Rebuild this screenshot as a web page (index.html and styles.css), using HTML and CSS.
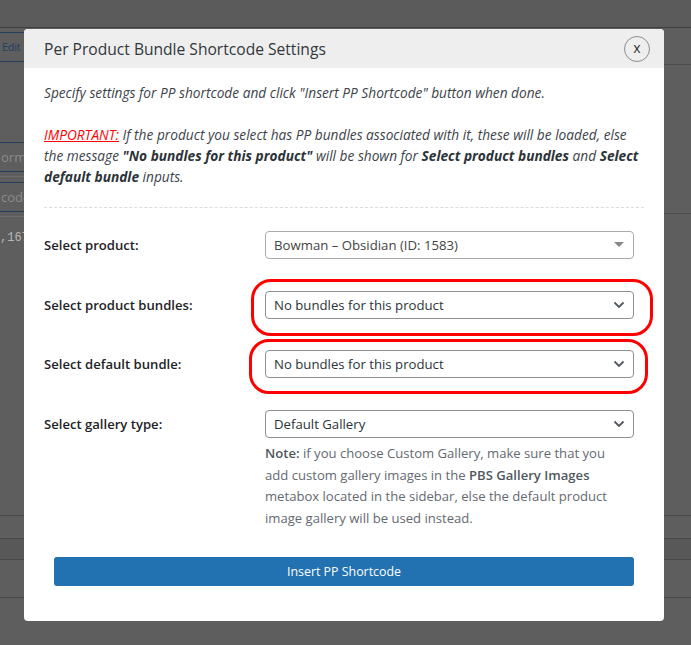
FILE: index.html
```html
<!DOCTYPE html>
<html>
<head>
<meta charset="utf-8">
<link rel="stylesheet" href="styles.css">
</head>
<body>
<div class="admin">
  <div class="topbar"></div>
  <div class="admin-main">
    <div class="left-col">
      <div class="bg-btn">Edit</div>
      <div class="bg-field f-orm">orm</div>
      <div class="bg-sep"></div>
      <div class="bg-field f-code">code</div>
      <div class="bg-sep"></div>
      <div class="bg-mono">,167</div>
    </div>
    <div class="mid-col"></div>
    <div class="right-col">
      <div class="r-line r1"></div>
      <div class="r-line r2"></div>
    </div>
  </div>
  <div class="bottom-rows">
    <div class="b-row b1"></div>
    <div class="b-row b2"></div>
    <div class="b-row b3"></div>
    <div class="b-row b4"></div>
  </div>
</div>

<div class="modal">
  <div class="modal-head">
    <h2 class="modal-title">Per Product Bundle Shortcode Settings</h2>
    <span class="close-btn">x</span>
  </div>
  <div class="modal-body">
    <p class="intro">Specify settings for PP shortcode and click "Insert PP Shortcode" button when done.</p>
    <p class="intro important-p"><span class="important">IMPORTANT:</span> If the product you select has PP bundles associated with it, these will be loaded, else the message <b>"No bundles for this product"</b> will be shown for <b>Select product bundles</b> and <b>Select default bundle</b> inputs.</p>
    <hr class="sep">
    <div class="form-grid">
      <label class="lbl">Select product:</label>
      <div class="cell">
        <div class="sel sel2"><span>Bowman – Obsidian (ID: 1583)</span>
          <svg class="tri" width="10" height="6" viewBox="0 0 10 6"><path d="M0 0 L10 0 L5 5 Z" fill="#888"/></svg>
        </div>
      </div>

      <label class="lbl">Select product bundles:</label>
      <div class="cell">
        <div class="sel"><span>No bundles for this product</span>
          <svg class="chev" width="12" height="8" viewBox="0 0 12 8"><path d="M1.5 1.5 L6 6 L10.5 1.5" fill="none" stroke="#50575e" stroke-width="1.8"/></svg>
        </div>
        <span class="ring ring1"></span>
      </div>

      <label class="lbl">Select default bundle:</label>
      <div class="cell">
        <div class="sel"><span>No bundles for this product</span>
          <svg class="chev" width="12" height="8" viewBox="0 0 12 8"><path d="M1.5 1.5 L6 6 L10.5 1.5" fill="none" stroke="#50575e" stroke-width="1.8"/></svg>
        </div>
        <span class="ring ring2"></span>
      </div>

      <label class="lbl">Select gallery type:</label>
      <div class="cell">
        <div class="sel"><span>Default Gallery</span>
          <svg class="chev" width="12" height="8" viewBox="0 0 12 8"><path d="M1.5 1.5 L6 6 L10.5 1.5" fill="none" stroke="#50575e" stroke-width="1.8"/></svg>
        </div>
        <p class="note"><b>Note:</b> if you choose Custom Gallery, make sure that you add custom gallery images in the <b>PBS Gallery Images</b> metabox located in the sidebar, else the default product image gallery will be used instead.</p>
      </div>
    </div>
    <div class="btn-wrap">
      <button class="insert-btn">Insert PP Shortcode</button>
    </div>
  </div>
</div>
</body>
</html>
```

FILE: styles.css
```css
* { box-sizing: border-box; }
html, body { margin: 0; padding: 0; }
body {
  background: #5e5e5e;
  font-family: "Open Sans", "Noto Sans", sans-serif;
  width: 691px;
  height: 645px;
  overflow: hidden;
  position: relative;
}

/* background admin page (dimmed) */
.admin { width: 691px; }
.topbar {
  height: 28px;
  background: #5b5b5b;
  border-bottom: 1px solid #3e3e3e;
}
.admin-main {
  display: grid;
  grid-template-columns: 24px 640px 27px;
  height: 487px;
}
.left-col { display: flex; flex-direction: column; overflow: hidden; }
.bg-btn {
  margin-top: 4px;
  height: 30px;
  border-top: 1px solid #22405e;
  border-bottom: 1px solid #22405e;
  font-size: 11px;
  color: #1f3f61;
  line-height: 28px;
  padding-left: 2px;
  white-space: nowrap;
  letter-spacing: -0.3px;
}
.bg-field {
  height: 30px;
  border-top: 1px solid #22405e;
  border-bottom: 1px solid #22405e;
  font-size: 13px;
  color: #8a8a8a;
  line-height: 28px;
  white-space: nowrap;
  padding-left: 1px;
}
.f-orm { margin-top: 80px; }
.bg-sep { height: 5px; border-bottom: 1px solid #6c6c6c; }
.f-code { margin-top: 5px; }
.bg-mono {
  margin-top: 14px;
  font-family: "Liberation Mono", "DejaVu Sans Mono", monospace;
  font-size: 12px;
  color: #b8b8b8;
  white-space: nowrap;
}
.right-col { display: flex; flex-direction: column; }
.r-line { border-bottom: 1px solid #4e4e4e; }
.r1 { height: 37px; }
.r2 { height: 149px; }

.bottom-rows { display: flex; flex-direction: column; }
.b-row { border-top: 1px solid #4a4a4a; }
.b1 { height: 23px; }
.b2 { height: 21px; background: #585858; }
.b3 { height: 38px; }
.b4 { height: 48px; }

/* modal */
.modal {
  position: absolute;
  left: 24px;
  top: 29px;
  width: 640px;
  height: 592px;
  background: #fff;
  border-radius: 4px;
  overflow: hidden;
}
.modal-head {
  height: 39px;
  background: #eeeeee;
  display: flex;
  align-items: center;
  justify-content: space-between;
  padding: 0 14px 0 20px;
}
.modal-title {
  margin: 0;
  font-size: 15.6px;
  font-weight: 400;
  color: #32373c;
}
.close-btn {
  width: 26px;
  height: 26px;
  border: 1px solid #8c8c8c;
  border-radius: 50%;
  display: flex;
  align-items: center;
  justify-content: center;
  font-size: 14px;
  color: #333;
  line-height: 1;
  padding-bottom: 2px;
}
.modal-body { padding: 14px 20px 0 20px; }
.intro {
  margin: 0;
  font-size: 13.7px;
  line-height: 21px;
  font-style: italic;
  color: #3c434a;
}
.intro b { color: #2c3338; font-weight: 700; }
.important-p { margin-top: 21px; }
.important { color: #ff0000; text-decoration: underline; }
.sep {
  margin: 20px 0 0 0;
  border: 0;
  border-top: 1px dashed #dcdcde;
  height: 0;
}

.form-grid {
  display: grid;
  grid-template-columns: 221px 369px;
  row-gap: 31.7px;
  margin-top: 23px;
  align-items: start;
}
.lbl {
  font-size: 13.1px;
  font-weight: 600;
  color: #1d2327;
  line-height: 28px;
}
.cell { position: relative; }
.sel {
  height: 28px;
  border: 1px solid #8c8f94;
  border-radius: 4px;
  display: flex;
  align-items: center;
  justify-content: space-between;
  padding: 0 8px 0 8px;
  font-size: 13.2px;
  color: #2c3338;
}
.sel2 { border-color: #aaa; color: #444; }
.tri { margin-right: 1px; }
.chev { margin-right: 0; }
.ring {
  position: absolute;
  border: 3px solid #ff0000;
  border-radius: 20px;
}
.ring1 { left: -14px; top: -12px; width: 402px; height: 57px; }
.ring2 { left: -16px; top: -11px; width: 399px; height: 55px; }
.note {
  margin: 5px 0 0 0;
  font-size: 13.1px;
  line-height: 21.6px;
  color: #646970;
  padding-right: 10px;
}
.note b { color: #50575e; font-weight: 600; }

.btn-wrap { padding: 28px 10px 0 10px; }
.insert-btn {
  width: 100%;
  height: 29px;
  background: #2271b1;
  border: 0;
  border-radius: 3px;
  color: #fff;
  font-family: inherit;
  font-size: 12.4px;
}
```
